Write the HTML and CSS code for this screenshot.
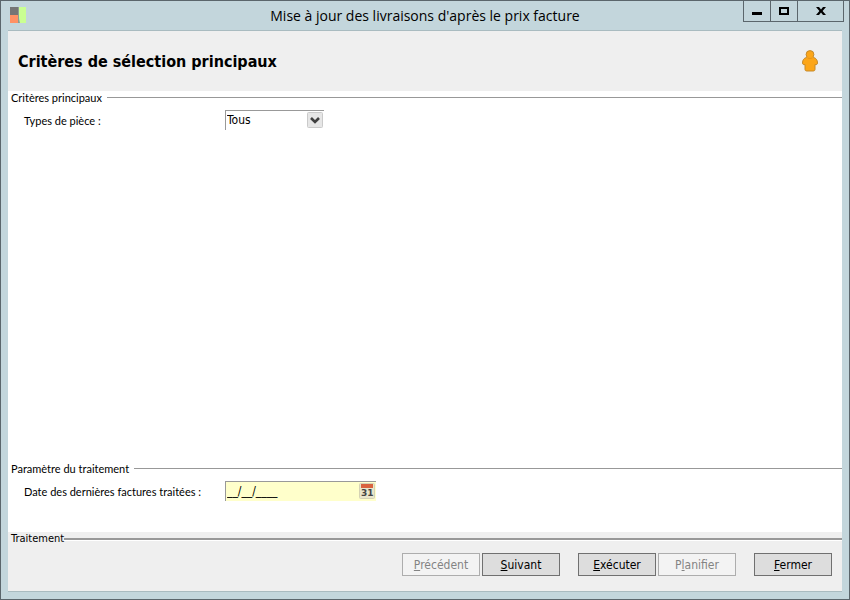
FILE: index.html
```html
<!DOCTYPE html>
<html lang="fr">
<head>
    <meta charset="UTF-8">
    <meta name="viewport" content="width=device-width, initial-scale=1.0">
    <title>Mise à jour des livraisons d'après le prix facture</title>
    <link rel="stylesheet" href="styles.css">
</head>
<body>
    <div class="window">
        <header class="titlebar">
            <svg class="logo" width="17" height="17" viewBox="0 0 17 17" aria-hidden="true">
                <rect x="0" y="0" width="8" height="8" fill="#757575"/>
                <rect x="0" y="8" width="8" height="8" fill="#ff9165"/>
                <path d="M8 0h1v10l1 6H8z" fill="#8d9a92"/>
                <path d="M9 0h7v16h-6l-1-6z" fill="#caff92"/>
            </svg>
            <h1 class="caption">Mise à jour des livraisons d'après le prix facture</h1>
            <div class="controls">
                <button type="button" class="control" aria-label="Réduire">
                    <svg width="12" height="12" viewBox="0 0 12 12"><rect x="1" y="7" width="10" height="3"/></svg>
                </button>
                <button type="button" class="control" aria-label="Agrandir">
                    <svg width="12" height="12" viewBox="0 0 12 12"><path d="M1 2h10v8H1zM3 4v4h6V4z" fill-rule="evenodd"/></svg>
                </button>
                <button type="button" class="control control-close" aria-label="Fermer la fenêtre">
                    <svg width="12" height="12" viewBox="0 0 12 12"><path d="M1 2h3l2 2.600 2-2.600h3L7.600 6l3.400 4H8L6 7.400 4 10H1l3.400-4z"/></svg>
                </button>
            </div>
        </header>

        <form class="content">
            <div class="heading">
                <h2>Critères de sélection principaux</h2>
                <svg class="person" width="16" height="22" viewBox="0 0 16 22" aria-hidden="true">
                    <path d="M4.500 7.500C2 8 .5 10 .5 13c0 1.500 1.200 2 2.500 1.500v5c0 1 .8 1.500 2 1.500h6c1.200 0 2-.5 2-1.500v-5c1.300.5 2.500 0 2.500-1.500 0-3-1.500-5-4-5.500z" fill="#fca619" stroke="#c58a2c"/>
                    <ellipse cx="8" cy="4.500" rx="3.900" ry="3.900" fill="#fca619" stroke="#c58a2c"/>
                    <path d="M5 7h6v2H5z" fill="#fca619"/>
                    <path d="M5.500 8q2.500 1 5 0" fill="none" stroke="#e5951b"/>
                </svg>
            </div>

            <section class="group group-main">
                <h3 class="group-title">Critères principaux</h3>
                <div class="field">
                    <label for="pieceType">Types de pièce :</label>
                    <div class="box">
                        <select id="pieceType">
                            <option>Tous</option>
                        </select>
                        <svg class="arrow" width="16" height="16" viewBox="0 0 16 16" aria-hidden="true">
                            <rect x=".5" y=".5" width="15" height="15" rx="1" fill="#e6e6e6" stroke="#cacaca"/>
                            <path d="M4 6l4 4 4-4" fill="none" stroke="#404040" stroke-width="2.600"/>
                        </svg>
                    </div>
                </div>
            </section>

            <section class="group">
                <h3 class="group-title">Paramètre du traitement</h3>
                <div class="field">
                    <label for="lastDate">Date des dernières factures traitées :</label>
                    <div class="box box-date">
                        <input type="text" id="lastDate" value="__/__/____">
                        <button type="button" class="calendar" aria-label="Choisir une date">
                            <svg width="16" height="16" viewBox="0 0 16 16">
                                <rect x=".5" y=".5" width="15" height="15" rx="1" fill="#e9e6cc" stroke="#d5d2b4"/>
                                <rect x="2" y="1" width="12" height="4" fill="#d9633f"/>
                                <text x="2" y="13" class="day">31</text>
                            </svg>
                        </button>
                    </div>
                </div>
            </section>

            <footer class="group footer">
                <h3 class="group-title">Traitement</h3>
                <div class="actions">
                    <div class="pair">
                        <button type="button" disabled><u>P</u>récédent</button>
                        <button type="button"><u>S</u>uivant</button>
                    </div>
                    <div class="pair">
                        <button type="button"><u>E</u>xécuter</button>
                        <button type="button" disabled>P<u>l</u>anifier</button>
                    </div>
                    <button type="button"><u>F</u>ermer</button>
                </div>
            </footer>
        </form>
    </div>
</body>
</html>
```
FILE: styles.css
```css
* {
    box-sizing: border-box;
}

body {
    margin: 0;
    font-family: Lato, "Liberation Sans", sans-serif;
    font-size: 11px;
    color: #000;
}

h1, h2, h3 {
    margin: 0;
    font-weight: normal;
}

button, select, input {
    margin: 0;
    padding: 0;
    border-radius: 0;
    color: #000;
    font-family: "DejaVu Sans Condensed", "DejaVu Sans", sans-serif;
    font-size: 12px;
}

svg {
    display: block;
}

.window {
    display: flex;
    flex-direction: column;
    min-height: 100vh;
    padding: 0 7px 7px;
    border: 1px solid #5b666c;
    background: #c3d6dc;
}

/* title bar */
.titlebar {
    display: grid;
    grid-template-columns: 101px 1fr 101px;
    height: 30px;
    border-bottom: 1px solid #a9bbc0;
}

.logo {
    margin: 6px 0 0 2px;
}

.caption {
    font-family: "Open Sans", sans-serif;
    font-size: 14px;
    line-height: 30px;
    text-align: center;
}

.controls {
    display: flex;
    justify-content: flex-end;
    height: 21px;
    margin-right: -2px;
}

.control {
    display: flex;
    align-items: center;
    justify-content: center;
    width: 27px;
    border: solid #5b666c;
    border-width: 0 0 1px 1px;
    background: none;
}

.control-close {
    width: 47px;
    border-right-width: 1px;
}

/* content */
.content {
    display: flex;
    flex: 1;
    flex-direction: column;
    border-bottom: 1px solid #a9bbc0;
    background: #fff;
}

.heading {
    display: flex;
    align-items: center;
    justify-content: space-between;
    height: 60px;
    padding: 0 24px 0 10px;
    background: #efefef;
}

.heading h2 {
    font-family: "DejaVu Sans Condensed", "DejaVu Sans", sans-serif;
    font-size: 16px;
    font-weight: bold;
}

.group {
    min-height: 70px;
}

.group-main {
    flex: 1;
}

.group-title {
    display: flex;
    align-items: center;
    gap: 5px;
    padding-left: 3px;
    font-size: 11px;
    line-height: 13px;
}

.group-title::after {
    content: "";
    flex: 1;
    height: 1px;
    background: #989898;
}

.field {
    display: flex;
    align-items: center;
    padding: 6px 0 0 16px;
}

.field label {
    width: 201px;
}

.box {
    position: relative;
    width: 99px;
    height: 20px;
    border: solid #999;
    border-width: 1px 0 0 1px;
}

.box-date {
    width: 151px;
    background: #ffffcb;
}

.box select,
.box input {
    display: block;
    width: 100%;
    height: 18px;
    padding-left: 1px;
    border: 0;
    background: none;
    appearance: none;
}

.arrow,
.calendar {
    position: absolute;
    top: 1px;
    right: 1px;
    pointer-events: none;
}

.calendar {
    border: 0;
    background: none;
    pointer-events: auto;
}

.day {
    font: bold 9px "DejaVu Sans", sans-serif;
    fill: #444;
}

/* bottom bar */
.footer {
    min-height: 59px;
    background: #efefef;
}

.footer .group-title {
    gap: 0;
    font-family: "DejaVu Sans Condensed", "DejaVu Sans", sans-serif;
    line-height: 14px;
}

.footer .group-title::after {
    height: 2px;
    border-bottom: 1px solid #fff;
}

.actions {
    display: flex;
    justify-content: flex-end;
    gap: 18px;
    padding: 7px 10px 0;
}

.pair {
    display: flex;
    gap: 2px;
}

.actions button {
    width: 78px;
    height: 23px;
    border: 1px solid #707070;
    background: #ddd;
}

.actions button:disabled {
    border-color: #adadad;
    background: #f3f3f3;
    color: #838383;
}
```
